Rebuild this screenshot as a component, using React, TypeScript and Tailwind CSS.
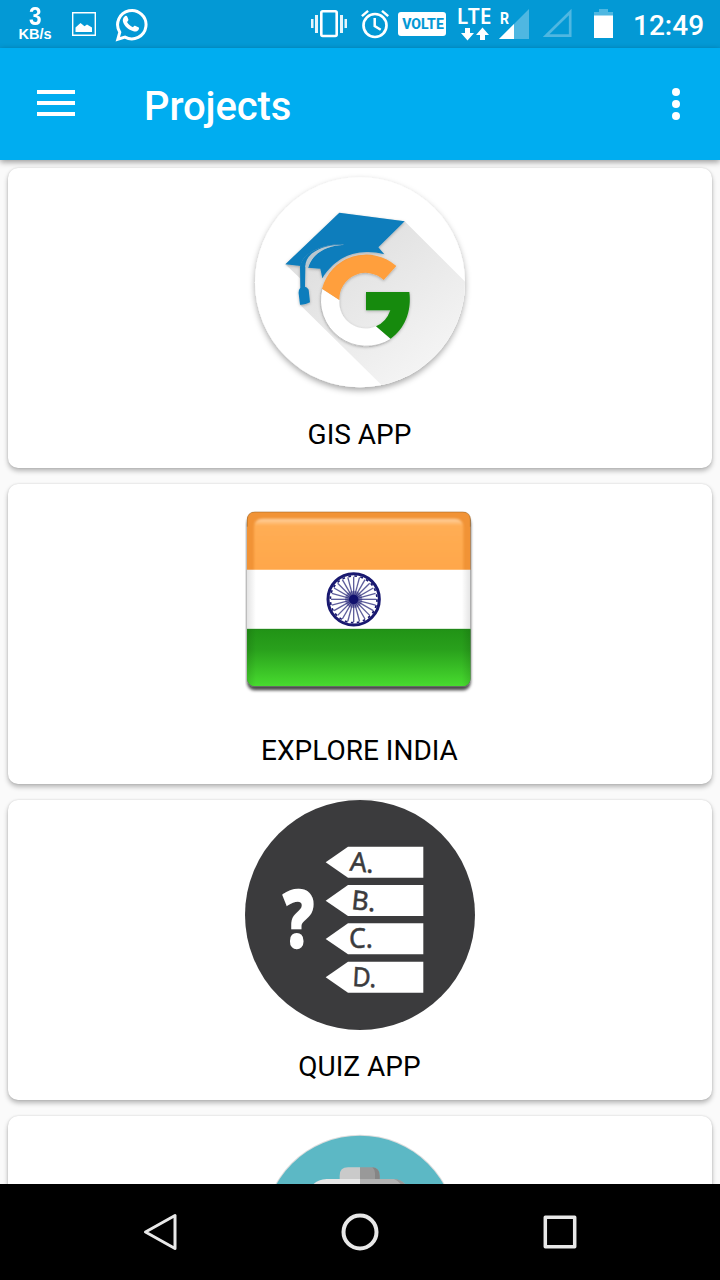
import type { ReactNode } from 'react';

function StatusIcon({ x, w, className, children }: { x: number; w: number; className: string; children: ReactNode }) {
  return (
    <svg viewBox={`${x} 0 ${w} 48`} width={w} height={48} className={`shrink-0 ${className}`} fill="#fff">
      {children}
    </svg>
  );
}

function StatusBar() {
  return (
    <header className="flex h-12 shrink-0 items-center bg-[#0399d5] text-white">
      <div className="ml-[17px] flex w-9 shrink-0 flex-col items-center font-['Liberation_Sans',sans-serif] font-bold">
        <span className="scale-x-[0.87] text-[26px] leading-[20px]">3</span>
        <span className="mt-px text-[14.5px] leading-[15px]">KB/s</span>
      </div>
      <StatusIcon x={72} w={24} className="ml-[19px]">
        <path d="M72.7 12.7h22.6v22.6H72.7z" fill="none" stroke="#fff" strokeWidth="1.4" />
        <path d="M75.500 32v-4.500l5-4.500 4 3.300 2.500-1.800 5 3V32z" />
      </StatusIcon>
      <StatusIcon x={115} w={34} className="ml-[18px]">
        <path d="M118.800 39.300l2-7.100a14.200 14.200 0 1 1 5.200 4.900z" fill="none" stroke="#fff" strokeWidth="3" strokeLinejoin="miter" />
        <path d="M125.900 16.200c1.200-.8 2-.4 2.400.6l1 2.500c.3.800-.1 1.400-1.300 2.800 1.500 2.500 3.200 4 6 5.200 1.200-1.600 1.700-1.800 2.500-1.400l2.800 1.300c.8.400.9.900.5 2-.8 2-3.200 2.700-5.300 2.100-5.300-1.500-9.300-5.200-10.500-9.500-.6-2 .2-4.600 1.900-5.600z" />
      </StatusIcon>
      <StatusIcon x={311} w={36} className="ml-[163px]">
        <rect x="321.300" y="11.300" width="15.400" height="24.700" rx="1.500" fill="none" stroke="#fff" strokeWidth="2.600" />
        <path d="M315 15h3v18h-3zM311 19h2.500v9H311zM340 15h3v18h-3zM344.500 19h2.500v9h-2.500z" opacity=".9" />
      </StatusIcon>
      <StatusIcon x={361} w={29} className="ml-[14px]">
        <circle cx="375" cy="25.500" r="11.500" fill="none" stroke="#fff" strokeWidth="2.700" />
        <path d="M361.900 16.100l6.200-5.200M382 10.900l6.200 5.200M374.700 18v8l6 3.700" fill="none" stroke="#fff" strokeWidth="2.500" />
      </StatusIcon>
      <div className="ml-2 flex h-6 w-12 shrink-0 items-center justify-center rounded-[3px] bg-white pl-0.5 text-[14px] font-extrabold leading-none text-[#0399d5]">
        <span>VOLTE</span>
      </div>
      <div className="ml-2.5 flex w-9 shrink-0 flex-col items-center font-['Noto_Sans',sans-serif] text-[21px] font-semibold">
        <span className="h-[19px] leading-[17px]">LTE</span>
        <svg viewBox="456 27 36 14" width="36" height="14" fill="#fff">
          <path d="M465 28h5v5h4l-6.500 7.500L461 33h4zM480 40h5v-5h4l-6.500-7.500L476 35h4z" />
        </svg>
      </div>
      <StatusIcon x={499} w={31} className="ml-[7px]">
        <path d="M499 39L529 9v30z" fill="#4fb7e1" />
        <path d="M499 39l15-15v15z" />
        <text x="500" y="24" fontSize="16" fontWeight="700" fontFamily="Roboto, sans-serif" textLength="9" lengthAdjust="spacingAndGlyphs">R</text>
      </StatusIcon>
      <StatusIcon x={543} w={29} className="ml-[13px]">
        <path d="M546 35.700L570.200 12v23.700z" fill="none" stroke="#4fb7e1" strokeWidth="2.700" />
      </StatusIcon>
      <StatusIcon x={594} w={19} className="ml-[22px]">
        <path d="M594 16v-4h5V9h9v3h5v4z" fill="#4fb7e1" />
        <path d="M594 15.500h19V38h-19z" />
      </StatusIcon>
      <span className="ml-5 pt-[3px] text-[28px] font-medium leading-none">12:49</span>
    </header>
  );
}

function AppBar() {
  return (
    <div className="relative z-10 flex h-28 shrink-0 items-center bg-[#00adf0] pl-[37px] pr-[30px] text-white shadow-[0_2px_6px_rgba(0,0,0,0.4)]">
      <div className="flex w-[38px] flex-col gap-[7px] pb-0.5">
        <div className="h-1 bg-white" />
        <div className="h-1 bg-white" />
        <div className="h-1 bg-white" />
      </div>
      <h1 className="ml-[69px] pt-1.5 text-[40px] font-medium leading-none tracking-[-0.1px]">Projects</h1>
      <div className="ml-auto mr-2.5 flex w-2 flex-col gap-1">
        <div className="size-2 rounded-full bg-white" />
        <div className="size-2 rounded-full bg-white" />
        <div className="size-2 rounded-full bg-white" />
      </div>
    </div>
  );
}

function GisLogo() {
  return (
    <svg viewBox="15 9 690 690" className="size-[230px]">
      <defs>
        <linearGradient id="longShadow" gradientUnits="userSpaceOnUse" x1="300" y1="250" x2="560" y2="600">
          <stop offset="0" stopColor="#e0e0e0" />
          <stop offset="1" stopColor="#f4f4f4" />
        </linearGradient>
        <filter id="discShadow" x="-10%" y="-10%" width="120%" height="125%">
          <feDropShadow dx="0" dy="9" stdDeviation="9" floodOpacity="0.35" />
        </filter>
        <filter id="softShadow" x="-10%" y="-10%" width="120%" height="120%">
          <feDropShadow dx="0" dy="3" stdDeviation="4" floodOpacity="0.28" />
        </filter>
        <clipPath id="disc"><circle cx="360" cy="352" r="315" /></clipPath>
      </defs>
      <circle cx="360" cy="352" r="315" fill="#fff" filter="url(#discShadow)" />
      <path d="M136 298l162-154 196 25 220 219v312H465L180 419V340z" fill="url(#longShadow)" clipPath="url(#disc)" />
      <g filter="url(#softShadow)">
        <path d="M246 371A138 138 0 0 0 452 523L408 484A79 79 0 0 1 298 405z" fill="#fff" />
        <path d="M246 371A137 137 0 0 1 469 303L431 345A79 79 0 0 0 298 405z" fill="#ff9f3c" />
        <path d="M378 381H508C516 440 492 493 452 521L408 484Q439 471 451 436H378z" fill="#168a0b" />
      </g>
      <path d="M246 371A138 138 0 0 0 452 523" fill="none" stroke="#999" strokeWidth="1.500" />
      <g fill="#0b7dbc" filter="url(#softShadow)">
        <path d="M136 298L298 143 494 169 415 247 433 268C348 246 284 279 247 340L241 311 204 308C219 262 259 241 312 240L304 237C237 240 186 268 182 303z" />
        <path d="M304 237C235 240 184 268 180 306L181 368Q175 374 176 386L180 419Q196 420 210 412L206 374Q202 367 195 365L196 306C204 262 252 243 312 240z" />
      </g>
      <path d="M312 239C246 237 195 265 196 306L204 308C219 262 261 242 312 239z" fill="#b9c7cf" />
    </svg>
  );
}

const spokes = Array.from({ length: 24 }, (_, i) => i * 15);

function IndiaFlag() {
  return (
    <svg viewBox="45 -18 690 690" className="size-[230px]">
      <defs>
        <linearGradient id="green" x1="0" y1="0" x2="0" y2="1">
          <stop offset="0" stopColor="#219316" />
          <stop offset="0.350" stopColor="#29a01c" />
          <stop offset="1" stopColor="#48dc2f" />
        </linearGradient>
        <linearGradient id="sides" x1="0" y1="0" x2="1" y2="0">
          <stop offset="0" stopColor="#000" stopOpacity="0.110" />
          <stop offset="0.040" stopColor="#000" stopOpacity="0" />
          <stop offset="0.960" stopColor="#000" stopOpacity="0" />
          <stop offset="1" stopColor="#000" stopOpacity="0.110" />
        </linearGradient>
        <linearGradient id="gloss" x1="0" y1="0" x2="0" y2="1">
          <stop offset="0" stopColor="#ffd3a3" />
          <stop offset="0.120" stopColor="#ffad54" />
          <stop offset="1" stopColor="#ffa649" />
        </linearGradient>
        <filter id="flagShadow" x="-5%" y="-5%" width="110%" height="112%">
          <feDropShadow dx="0" dy="10" stdDeviation="5" floodOpacity="0.700" />
        </filter>
        <filter id="blurEdge"><feGaussianBlur stdDeviation="3" /></filter>
        <clipPath id="flag"><rect x="51" y="65" width="671" height="524" rx="24" /></clipPath>
      </defs>
      <rect x="51" y="67" width="671" height="524" rx="24" fill="#666" filter="url(#flagShadow)" />
      <g clipPath="url(#flag)">
        <path d="M51 65h671v175H51z" fill="#f19336" />
        <path d="M72 260V112Q72 86 98 86H674Q700 86 700 112V260z" fill="url(#gloss)" filter="url(#blurEdge)" />
        <path d="M51 239h671v180H51z" fill="#fff" />
        <path d="M51 418h671v171H51z" fill="url(#green)" />
        <path d="M51 239h671v350H51z" fill="url(#sides)" />
        <path d="M51 418h671" stroke="#198211" strokeWidth="3" />
      </g>
      <path d="M52 110V89Q52 66 75 66H698Q721 66 721 89V110" fill="none" stroke="#8b5a22" strokeOpacity="0.450" strokeWidth="3" />
      <g transform="translate(371 328)" stroke="#191970" fill="none">
        <circle r="77" strokeWidth="9" />
        <circle r="70" strokeWidth="5" strokeDasharray="8 10.326" />
        {spokes.map((a) => (
          <path key={a} d="M0 0H68" strokeWidth="4" opacity="0.700" transform={`rotate(${a})`} />
        ))}
        <circle r="26" fill="#191970" stroke="none" opacity="0.400" />
        <circle r="14" fill="#10106e" stroke="none" />
      </g>
    </svg>
  );
}

const answers = [
  { letter: 'A.', x: 345, y: 170, tilt: 6 },
  { letter: 'B.', x: 350, y: 285, tilt: 6 },
  { letter: 'C.', x: 342, y: 400, tilt: 0 },
  { letter: 'D.', x: 352, y: 515, tilt: 3 },
];

function QuizLogo() {
  return (
    <svg viewBox="30 30 690 690" className="size-[230px]">
      <circle cx="375" cy="375" r="345" fill="#3b3b3d" />
      <text x="191" y="470" fill="#fff" stroke="#fff" strokeWidth="7" fontFamily="'Noto Sans', sans-serif" fontWeight="800" fontSize="234" textAnchor="middle" textLength="92" lengthAdjust="spacingAndGlyphs">?</text>
      {answers.map((a) => (
        <g key={a.letter}>
          <path d={`M272 ${a.y + 47}L339 ${a.y}H565V${a.y + 93}H339z`} fill="#fff" />
          <text x={a.x} y={a.y + 75} fill="#3b3b3d" stroke="#3b3b3d" strokeWidth="1.500" fontFamily="'Noto Sans', sans-serif" fontWeight="400" fontSize="80" textLength="72" lengthAdjust="spacingAndGlyphs" transform={`rotate(${a.tilt} ${a.x + 30} ${a.y + 50})`}>{a.letter}</text>
        </g>
      ))}
    </svg>
  );
}

function BatteryLogo() {
  return (
    <svg viewBox="15 78 690 690" className="size-[230px]">
      <circle cx="360" cy="425" r="291" fill="#ddd" />
      <circle cx="360" cy="425" r="288" fill="#5cb8c5" />
      <path d="M360 232H324Q299 232 299 257V300H360z" fill="#cacaca" />
      <path d="M360 232H394Q419 232 419 257V300H360z" fill="#999" />
      <path d="M397 232Q419 234 419 257V268H405V250Q405 239 397 232z" fill="#858585" />
      <path d="M360 267H260Q212 270 205 315V600H360z" fill="#e6e6e6" />
      <path d="M360 267H460Q502 270 510 315V600H360z" fill="#b3b3b3" />
      <path d="M463 267Q494 270 505 300H490Q485 278 463 267z" fill="#999" />
    </svg>
  );
}

function ProjectCard({ title, children }: { title?: string; children: ReactNode }) {
  return (
    <article className="flex h-[300px] shrink-0 flex-col items-center rounded-[10px] bg-white shadow-[0_3px_5px_rgba(0,0,0,0.27),0_0_2px_rgba(0,0,0,0.15)]">
      {children}
      {title && <h2 className="mt-[21px] pr-px text-[28px] leading-8 text-black">{title}</h2>}
    </article>
  );
}

function NavigationBar() {
  return (
    <nav className="flex h-24 shrink-0 items-center justify-center gap-[160px] bg-black">
      <svg viewBox="0 0 40 40" className="size-10" fill="none" stroke="#e8e8e8" strokeWidth="3" strokeLinejoin="round">
        <path d="M5.500 20L35 3.500v33z" />
      </svg>
      <svg viewBox="0 0 40 40" className="size-10" fill="none" stroke="#e8e8e8" strokeWidth="4">
        <circle cx="20" cy="20" r="16.500" />
      </svg>
      <svg viewBox="0 0 40 40" className="size-10" fill="none" stroke="#e8e8e8" strokeWidth="3.500" strokeLinejoin="round">
        <path d="M5.300 5.300h29.400v29.400H5.300z" />
      </svg>
    </nav>
  );
}

export default function App() {
  return (
    <div className="flex h-screen w-full flex-col overflow-hidden bg-[#fafafa] font-[Roboto,sans-serif]">
      <StatusBar />
      <AppBar />
      <main className="flex min-h-0 flex-1 flex-col gap-4 overflow-hidden p-2">
        <ProjectCard title="GIS APP"><GisLogo /></ProjectCard>
        <ProjectCard title="EXPLORE INDIA"><IndiaFlag /></ProjectCard>
        <ProjectCard title="QUIZ APP"><QuizLogo /></ProjectCard>
        <ProjectCard><BatteryLogo /></ProjectCard>
      </main>
      <NavigationBar />
    </div>
  );
}
